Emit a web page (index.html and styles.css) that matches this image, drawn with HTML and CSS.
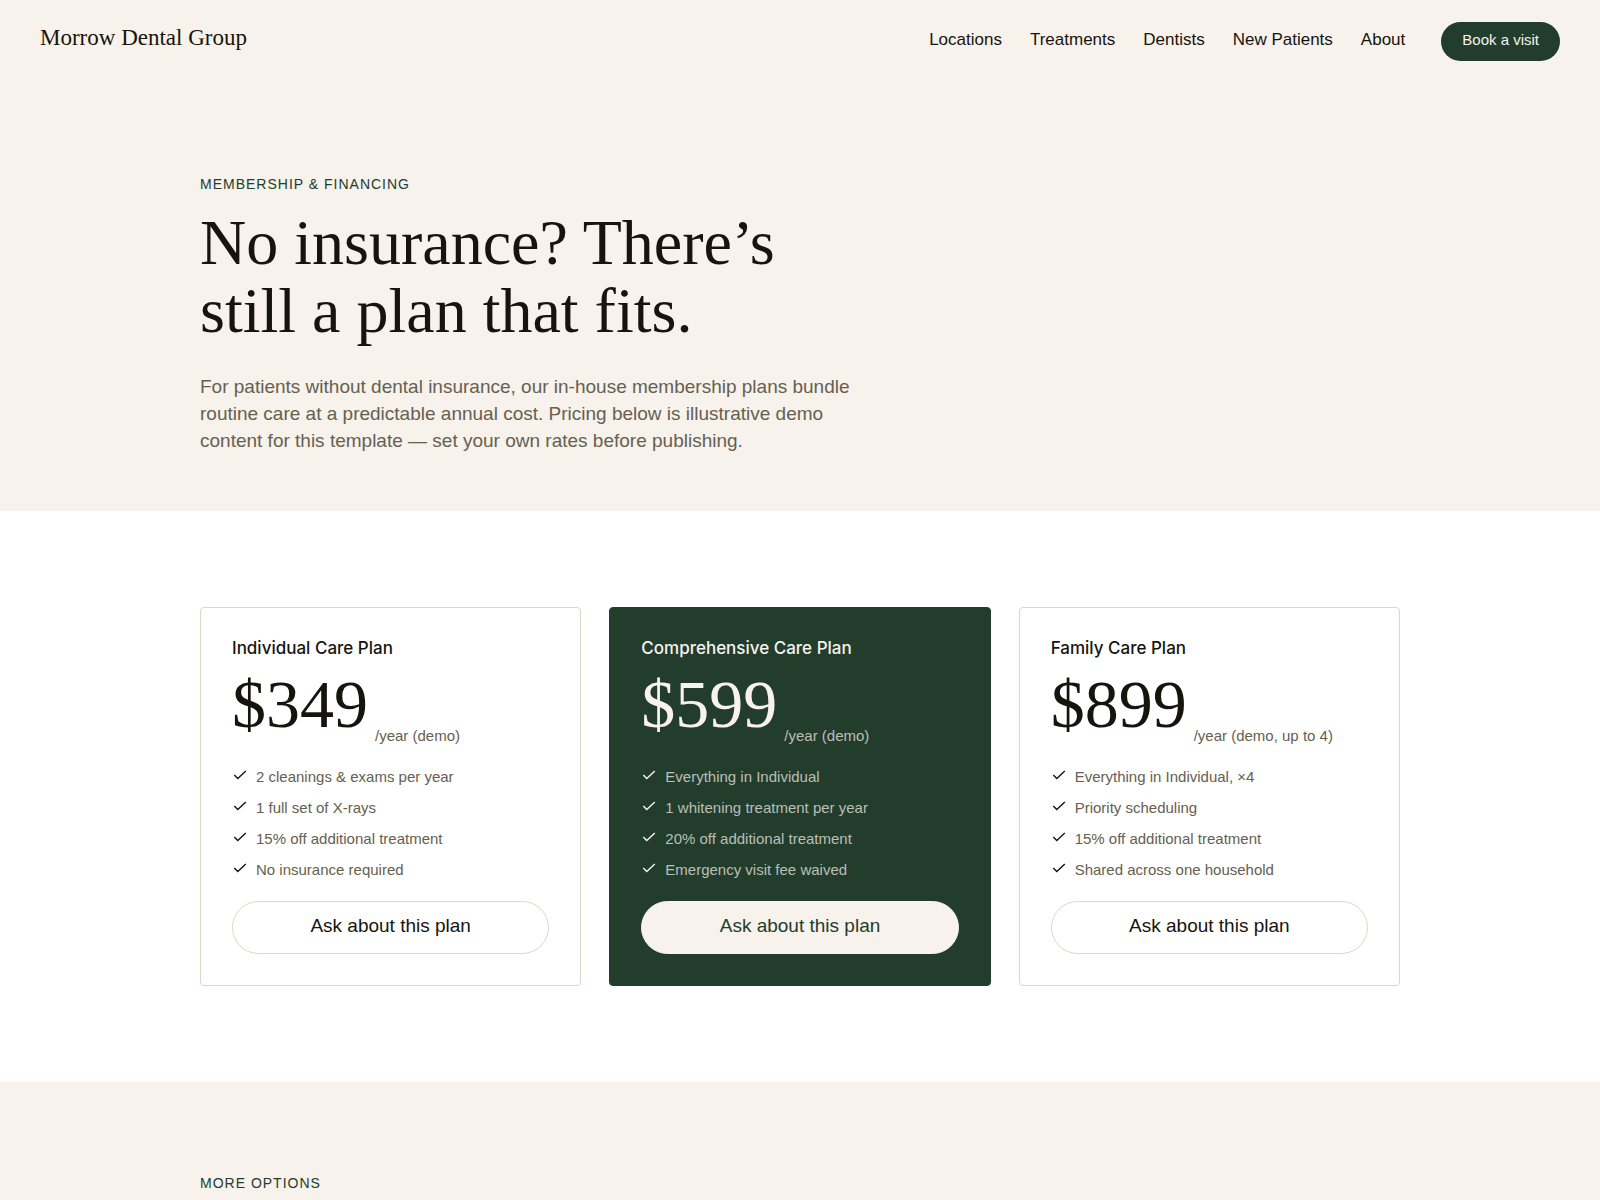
FILE: index.html
```html
<!DOCTYPE html>
<html lang="en">
<head>
<meta charset="utf-8">
<meta name="viewport" content="width=device-width, initial-scale=1">
<title>Membership &amp; Financing | Morrow Dental Group</title>
<link rel="stylesheet" href="styles.css">
</head>
<body>
<svg class="sprite" aria-hidden="true"><symbol id="check" viewBox="0 0 16 16"><path d="M2.3 9 5.8 12.6 13.8 5" fill="none" stroke="currentColor" stroke-width="1.4"/></symbol></svg>

<header class="site-header">
  <a class="brand" href="#">Morrow Dental Group</a>
  <nav class="site-nav" aria-label="Main">
    <a href="#">Locations</a>
    <a href="#">Treatments</a>
    <a href="#">Dentists</a>
    <a href="#">New Patients</a>
    <a href="#">About</a>
  </nav>
  <a class="book" href="#">Book a visit</a>
</header>

<main>
  <section class="hero">
    <div class="container">
      <p class="eyebrow">MEMBERSHIP &amp; FINANCING</p>
      <h1>No insurance? There’s<br>still a plan that fits.</h1>
      <p class="lead">For patients without dental insurance, our in-house membership plans bundle routine care at a predictable annual cost. Pricing below is illustrative demo content for this template — set your own rates before publishing.</p>
    </div>
  </section>

  <section class="plans">
    <div class="container plan-grid">
      <article class="plan">
        <h2>Individual Care Plan</h2>
        <p class="price"><span class="amount">$349</span><span class="term">/year (demo)</span></p>
        <ul>
          <li><svg><use href="#check"/></svg>2 cleanings &amp; exams per year</li>
          <li><svg><use href="#check"/></svg>1 full set of X-rays</li>
          <li><svg><use href="#check"/></svg>15% off additional treatment</li>
          <li><svg><use href="#check"/></svg>No insurance required</li>
        </ul>
        <button class="ask" type="button">Ask about this plan</button>
      </article>
      <article class="plan featured">
        <h2>Comprehensive Care Plan</h2>
        <p class="price"><span class="amount">$599</span><span class="term">/year (demo)</span></p>
        <ul>
          <li><svg><use href="#check"/></svg>Everything in Individual</li>
          <li><svg><use href="#check"/></svg>1 whitening treatment per year</li>
          <li><svg><use href="#check"/></svg>20% off additional treatment</li>
          <li><svg><use href="#check"/></svg>Emergency visit fee waived</li>
        </ul>
        <button class="ask" type="button">Ask about this plan</button>
      </article>
      <article class="plan">
        <h2>Family Care Plan</h2>
        <p class="price"><span class="amount">$899</span><span class="term">/year (demo, up to 4)</span></p>
        <ul>
          <li><svg><use href="#check"/></svg>Everything in Individual, ×4</li>
          <li><svg><use href="#check"/></svg>Priority scheduling</li>
          <li><svg><use href="#check"/></svg>15% off additional treatment</li>
          <li><svg><use href="#check"/></svg>Shared across one household</li>
        </ul>
        <button class="ask" type="button">Ask about this plan</button>
      </article>
    </div>
  </section>

  <section class="more">
    <div class="container">
      <p class="eyebrow">MORE OPTIONS</p>
    </div>
  </section>
</main>
</body>
</html>
```
FILE: styles.css
```css
:root {
  --cream: #f7f2ec;
  --ink: #17140e;
  --muted: #666050;
  --green: #223d2c;
  --line: #ddd6c8;
  --sans: "Liberation Sans", Arial, sans-serif;
  --serif: "Liberation Serif", "Times New Roman", serif;
}

* { box-sizing: border-box; }

body {
  margin: 0;
  background: var(--cream);
  color: var(--ink);
  font-family: var(--sans);
}

h1, h2, p, ul { margin: 0; padding: 0; font-weight: 400; }
a { color: inherit; text-decoration: none; }
.sprite { display: none; }

.container {
  max-width: 1264px;
  margin: 0 auto;
  padding: 0 32px;
}

/* Header */
.site-header {
  display: flex;
  align-items: baseline;
  padding: 22px 40px;
}
.brand {
  margin-right: auto;
  font: 23px/28px var(--serif);
}
.site-nav {
  display: flex;
  gap: 28px;
  margin-right: 36px;
  font-size: 17px;
  line-height: 20px;
}
.book {
  padding: 9px 21px 12px;
  border-radius: 20px;
  background: var(--green);
  color: var(--cream);
  font-size: 15px;
  line-height: 18px;
}

/* Hero */
.hero { padding: 91px 0 57px; }
.eyebrow {
  color: var(--green);
  font-size: 14px;
  line-height: 20px;
  letter-spacing: 1px;
}
h1 {
  margin-top: 15px;
  font: 64px/68px var(--serif);
}
.lead {
  max-width: 660px;
  margin-top: 28px;
  color: var(--muted);
  font-size: 19px;
  line-height: 27px;
}

/* Plans */
.plans { padding: 96px 0; background: #fff; }
.plan-grid {
  display: grid;
  grid-template-columns: repeat(3, 1fr);
  gap: 28px;
}
.plan {
  padding: 31px;
  border: 1px solid var(--line);
  border-radius: 4px;
}
.plan h2 { font: 500 17px/18px Inter, var(--sans); }
.price {
  display: flex;
  align-items: flex-end;
  gap: 7px;
  margin-top: 5px;
}
.amount { font: 68px/84px var(--serif); }
.term {
  color: var(--muted);
  font-size: 15px;
  line-height: 20px;
}
.plan ul {
  display: grid;
  gap: 9px;
  margin: 20px 0;
  list-style: none;
}
.plan li {
  display: flex;
  gap: 8px;
  color: var(--muted);
  font-size: 15px;
  line-height: 22px;
}
.plan li svg {
  width: 16px;
  height: 16px;
  color: var(--ink);
}
.ask {
  display: block;
  width: 100%;
  padding: 13px 16px 16px;
  border: 1px solid var(--line);
  border-radius: 27px;
  background: transparent;
  color: var(--ink);
  font: 19px/22px var(--sans);
}

.featured {
  border-color: var(--green);
  background: var(--green);
  color: var(--cream);
}
.featured .term, .featured li { color: #bbbfb6; }
.featured li svg { color: var(--cream); }
.featured .ask {
  border-color: var(--cream);
  background: var(--cream);
  color: var(--green);
}

/* More options */
.more { padding-top: 91px; }

@media (max-width: 960px) {
  .plan-grid { grid-template-columns: 1fr; }
  .site-header, .site-nav { flex-wrap: wrap; }
}
```
